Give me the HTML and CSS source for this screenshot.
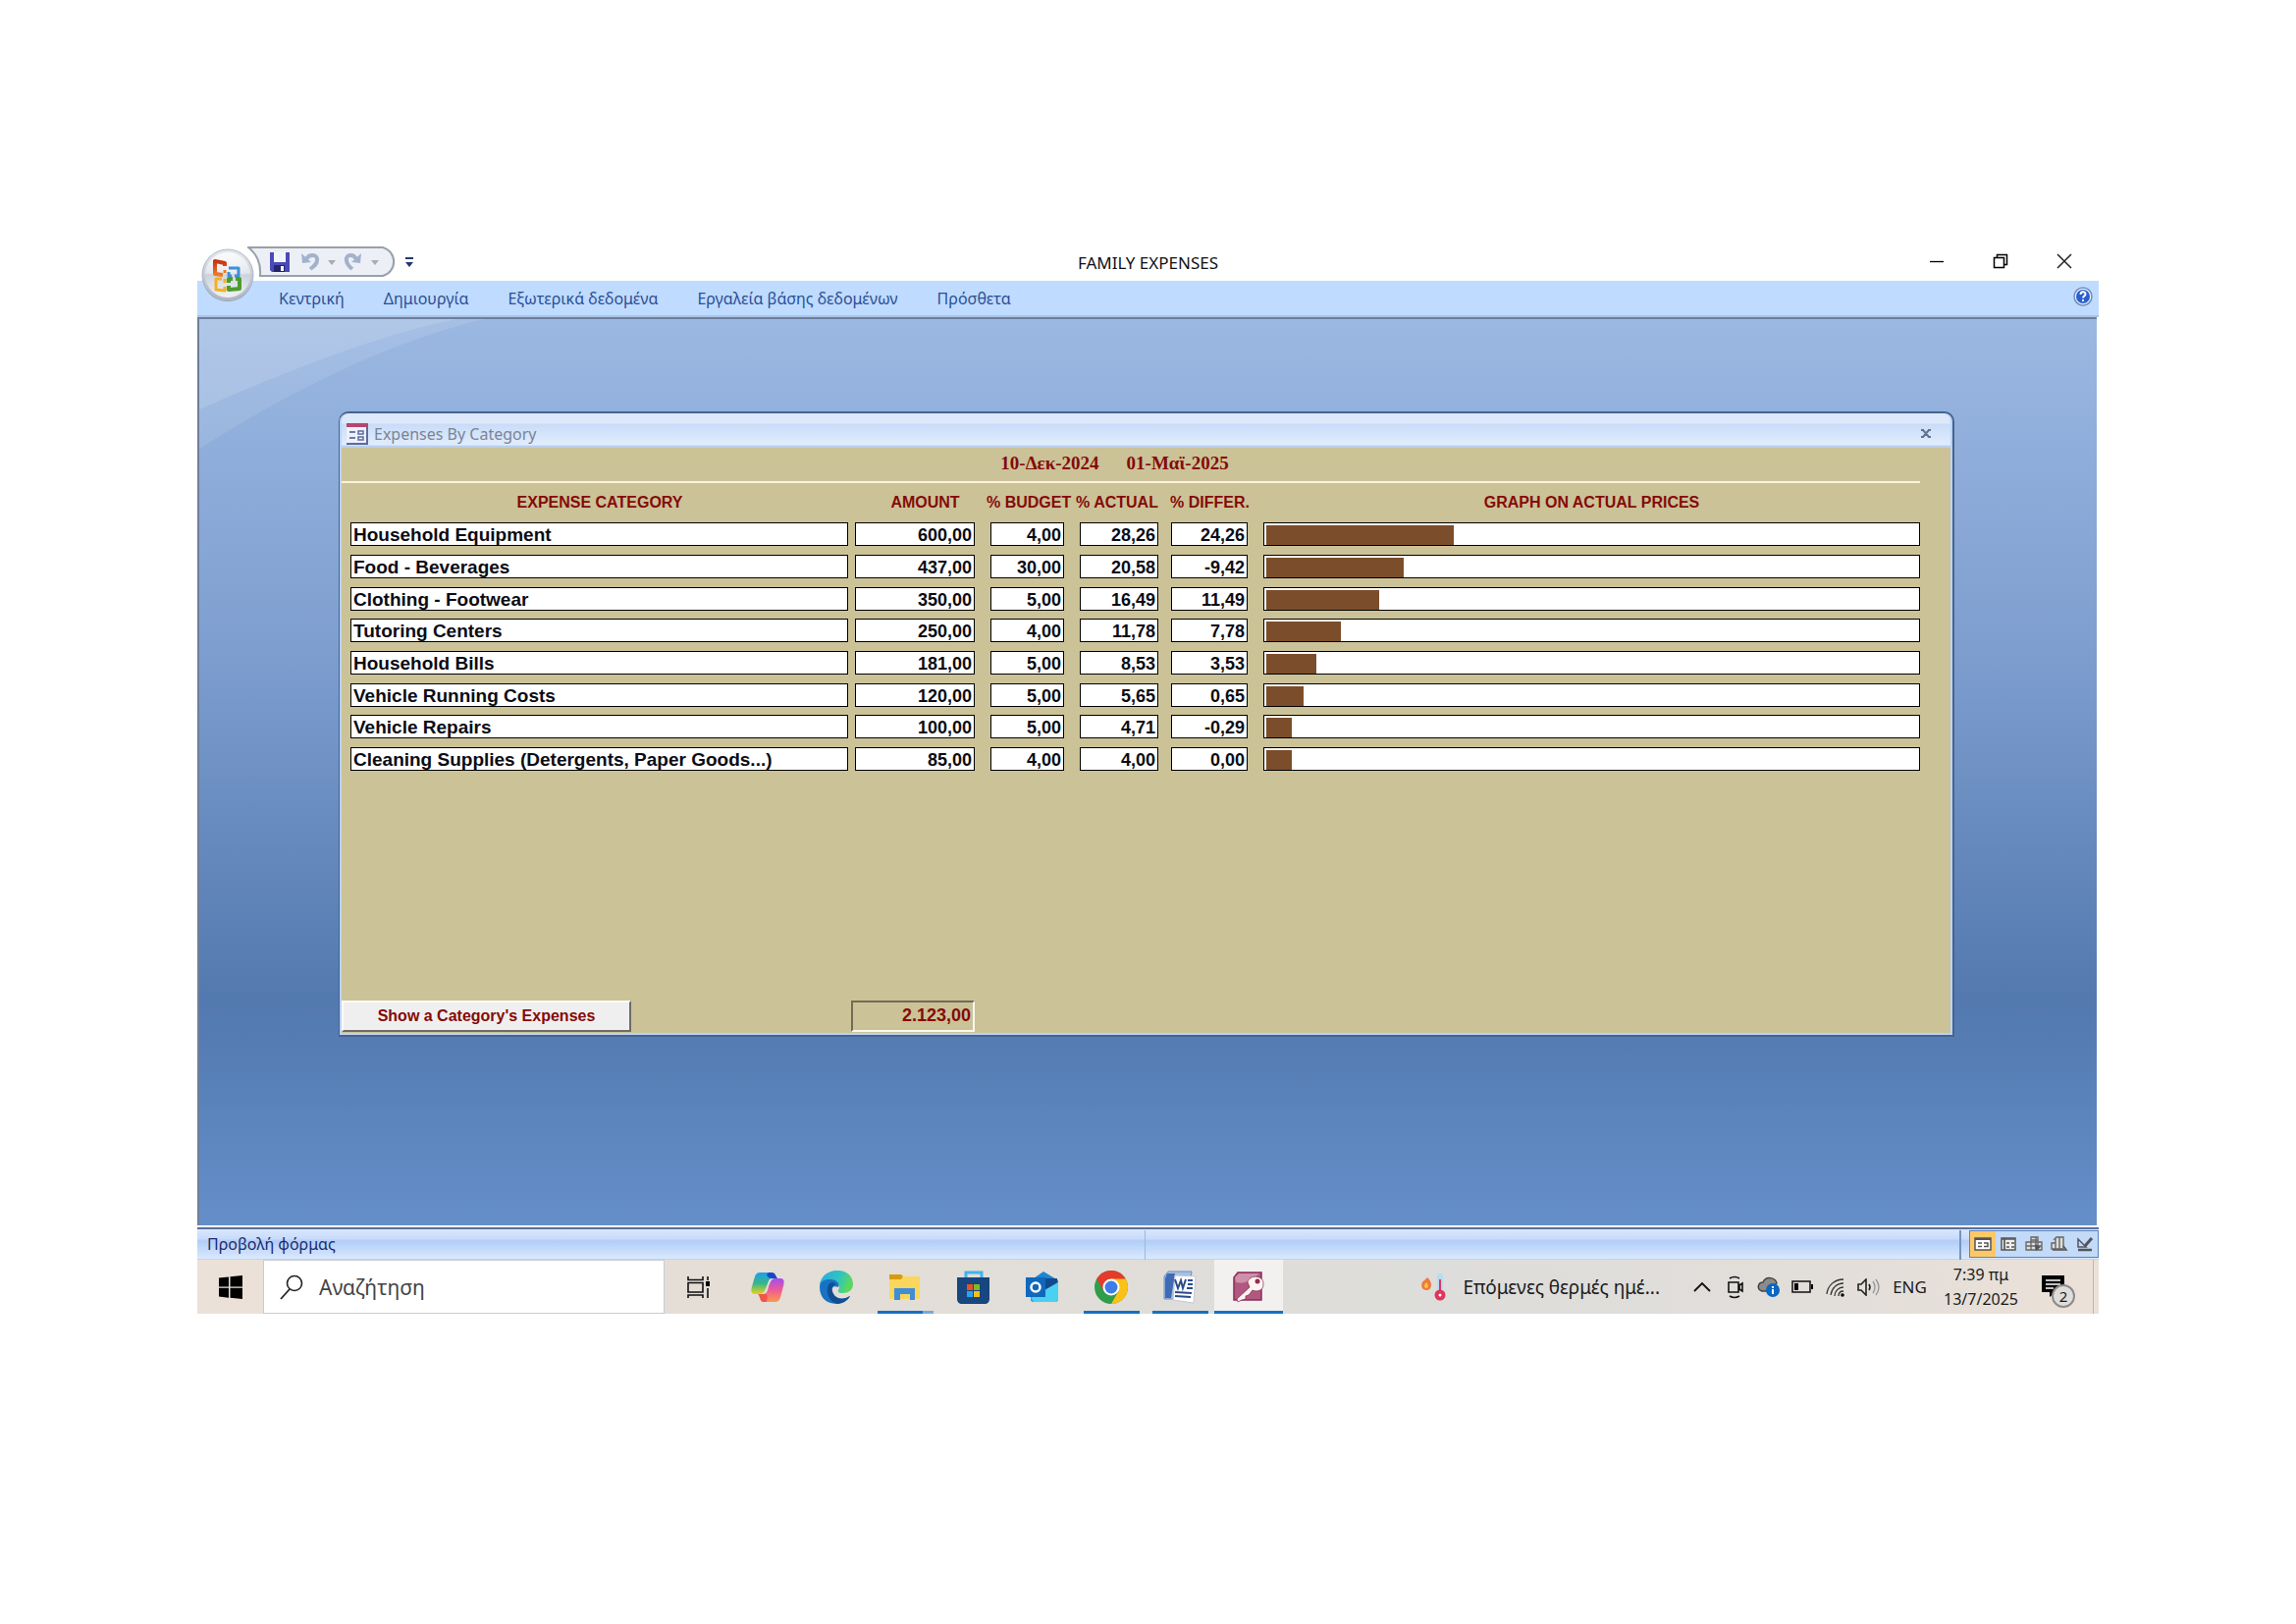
FILE: index.html
```html
<!DOCTYPE html>
<html lang="el">
<head>
<meta charset="utf-8">
<title>FAMILY EXPENSES</title>
<link rel="stylesheet" href="styles.css">
</head>
<body>
<div class="app">
  <header class="titlebar">
    <button class="office" aria-label="Office">
      <svg width="56" height="56" viewBox="0 0 56 56">
        <defs>
          <radialGradient id="orb" cx="50%" cy="35%" r="65%"><stop offset="0" stop-color="#fff"/><stop offset=".55" stop-color="#dfe3ea"/><stop offset="1" stop-color="#a9b3c3"/></radialGradient>
          <linearGradient id="shine" x1="0" y1="0" x2="0" y2="1"><stop offset="0" stop-color="#fff"/><stop offset=".45" stop-color="#e6e9ef"/><stop offset=".5" stop-color="#c9d0dc"/><stop offset="1" stop-color="#fff"/></linearGradient>
          <linearGradient id="lo" x1="0" y1="0" x2="0" y2="1"><stop offset="0" stop-color="#c9330f"/><stop offset="1" stop-color="#f07a28"/></linearGradient>
        </defs>
        <circle cx="28" cy="29" r="26" fill="#8f98a8"/>
        <circle cx="28" cy="28" r="26" fill="url(#orb)" stroke="#b3bac6"/>
        <circle cx="28" cy="28" r="23" fill="url(#shine)" opacity=".8"/>
        <g fill="none" stroke-linejoin="round">
          <path d="M25 19v-3l-10-2v13l8 1" stroke="url(#lo)" stroke-width="4"/>
          <path d="M25 23v3" stroke="#f07a28" stroke-width="3"/>
          <path d="M29 21h10v8h-4M29 25v4h3" stroke="#3f8fd8" stroke-width="3"/>
          <path d="M22 32h-6v11l9 1v-4M25 32v4" stroke="#f6b021" stroke-width="3"/>
          <path d="M29 36v-4h4M36 32h4v10l-11 1v-4" stroke="#4c9c2c" stroke-width="4"/>
        </g>
      </svg>
    </button>
    <svg class="qat-shape" width="155" height="32" viewBox="0 0 155 32"><path d="M1 1h137a15 15 0 0 1 0 29H13C14 18 10 8 1 1z" fill="#ecf0f6" stroke="#99a0a8" stroke-width="2"/></svg>
    <nav class="qat">
      <button class="save" aria-label="Save"><svg width="20" height="20" viewBox="0 0 20 20"><path d="M0 0h20v20H2l-2-2z" fill="#4a4ab8"/><path d="M4 0h12v10H4z" fill="#f2f5fd"/><path d="M4 13h11v7H4z" fill="#25256e"/><path d="M11 14h3v5h-3z" fill="#fff"/></svg></button>
      <button aria-label="Undo"><svg width="20" height="20" viewBox="0 0 20 20"><path d="M6 7c3-6 12-5 11 1 0 4-3 6-7 9" fill="none" stroke="#a3b2cc" stroke-width="4"/><path d="M1 1l1 10 9-1z" fill="#a3b2cc"/></svg></button>
      <svg class="caret" width="8" height="5" viewBox="0 0 8 5"><path d="M0 0h8L4 5z" fill="#a9acb2"/></svg>
      <button aria-label="Redo"><svg width="20" height="20" viewBox="0 0 20 20"><path d="M13 7C10 1 2 2 3 8c0 4 2 6 6 9" fill="none" stroke="#a3b2cc" stroke-width="4"/><path d="M18 1l-1 10-9-1z" fill="#a3b2cc"/></svg></button>
      <svg class="caret" width="8" height="5" viewBox="0 0 8 5"><path d="M0 0h8L4 5z" fill="#a9acb2"/></svg>
      <button class="more" aria-label="Customize"><svg width="8" height="10" viewBox="0 0 8 10"><path d="M0 0h8v2H0zM0 5h8L4 10z" fill="#24386b"/></svg></button>
    </nav>
    <h1>FAMILY EXPENSES</h1>
    <div class="win-buttons">
      <button aria-label="Minimize"><svg width="16" height="16" viewBox="0 0 16 16"><path d="M1 8.500h14" stroke="#000" stroke-width="1.300"/></svg></button>
      <button aria-label="Restore"><svg width="16" height="16" viewBox="0 0 16 16"><path d="M1.500 4.500h10v10h-10zM4.500 4V1.500h10v10H12" fill="none" stroke="#000" stroke-width="1.500"/></svg></button>
      <button aria-label="Close"><svg width="16" height="16" viewBox="0 0 16 16"><path d="M1 1l14 14M15 1L1 15" stroke="#222" stroke-width="1.500"/></svg></button>
    </div>
  </header>
  <nav class="tabs">
    <a href="#">Κεντρική</a><a href="#">Δημιουργία</a><a href="#">Εξωτερικά δεδομένα</a><a href="#">Εργαλεία βάσης δεδομένων</a><a href="#">Πρόσθετα</a>
    <button class="help" aria-label="Help"><svg width="20" height="20" viewBox="0 0 20 20"><circle cx="10" cy="10" r="9" fill="#e8f0fd" stroke="#6f8fbe" stroke-width="1.500"/><circle cx="10" cy="10" r="7" fill="#2a5fd0"/><path d="M7.500 8c0-3.500 5-3.500 5-.5 0 2-2.500 2-2.500 4M10 13v2" fill="none" stroke="#fff" stroke-width="2"/></svg></button>
  </nav>
  <main class="workspace">
    <svg class="sweep" width="300" height="140" viewBox="0 0 300 140"><path d="M0 0h290C190 24 90 75 0 132z" fill="#fff" opacity=".1"/><path d="M0 0h262C175 18 85 55 0 92z" fill="#fff" opacity=".13"/></svg>
    <section class="window">
      <div class="window-title">
        <svg width="22" height="22" viewBox="0 0 22 22"><path d="M0 1h22v20H0z" fill="#eef0fa"/><path d="M0 0h22v4H0z" fill="#b8456f"/><path d="M21 4v17H0" fill="none" stroke="#5d6c9c" stroke-width="2"/><path d="M3 9h6M3 15h6" stroke="#6c7cab" stroke-width="2"/><path d="M12 8h5v3h-5zM12 14h5v3h-5z" fill="none" stroke="#5d6c9c" stroke-width="1.500"/></svg>
        <h2>Expenses By Category</h2>
        <button aria-label="Close form"><svg width="10" height="9" viewBox="0 0 10 9"><path d="M0 1h3M7 1h3M0 8h3M7 8h3M2 1l6 7M8 1L2 8" stroke="#64748c" stroke-width="2"/></svg></button>
      </div>
      <div class="form">
        <div class="period"><time datetime="2024-12-10">10-Δεκ-2024</time><time datetime="2025-05-01">01-Μαϊ-2025</time></div>
        <table>
          <colgroup><col class="c-name"><col class="c-amount"><col class="c-budget"><col class="c-actual"><col class="c-differ"><col></colgroup>
          <thead><tr><th>EXPENSE CATEGORY</th><th class="amount">AMOUNT</th><th class="pct">% BUDGET</th><th class="pct">% ACTUAL</th><th class="pct">% DIFFER.</th><th>GRAPH ON ACTUAL PRICES</th></tr></thead>
          <tbody>
            <tr><td><div>Household Equipment</div></td><td><div>600,00</div></td><td><div>4,00</div></td><td><div>28,26</div></td><td><div>24,26</div></td><td><div><i class="bar" style="width:28.8%"></i></div></td></tr>
            <tr><td><div>Food - Beverages</div></td><td><div>437,00</div></td><td><div>30,00</div></td><td><div>20,58</div></td><td><div>-9,42</div></td><td><div><i class="bar" style="width:21.1%"></i></div></td></tr>
            <tr><td><div>Clothing - Footwear</div></td><td><div>350,00</div></td><td><div>5,00</div></td><td><div>16,49</div></td><td><div>11,49</div></td><td><div><i class="bar" style="width:17.3%"></i></div></td></tr>
            <tr><td><div>Tutoring Centers</div></td><td><div>250,00</div></td><td><div>4,00</div></td><td><div>11,78</div></td><td><div>7,78</div></td><td><div><i class="bar" style="width:11.5%"></i></div></td></tr>
            <tr><td><div>Household Bills</div></td><td><div>181,00</div></td><td><div>5,00</div></td><td><div>8,53</div></td><td><div>3,53</div></td><td><div><i class="bar" style="width:7.7%"></i></div></td></tr>
            <tr><td><div>Vehicle Running Costs</div></td><td><div>120,00</div></td><td><div>5,00</div></td><td><div>5,65</div></td><td><div>0,65</div></td><td><div><i class="bar" style="width:5.8%"></i></div></td></tr>
            <tr><td><div>Vehicle Repairs</div></td><td><div>100,00</div></td><td><div>5,00</div></td><td><div>4,71</div></td><td><div>-0,29</div></td><td><div><i class="bar" style="width:3.9%"></i></div></td></tr>
            <tr><td><div>Cleaning Supplies (Detergents, Paper Goods...)</div></td><td><div>85,00</div></td><td><div>4,00</div></td><td><div>4,00</div></td><td><div>0,00</div></td><td><div><i class="bar" style="width:3.9%"></i></div></td></tr>
          </tbody>
        </table>
        <footer class="form-footer"><button class="show">Show a Category's Expenses</button><output class="total">2.123,00</output></footer>
      </div>
    </section>
  </main>
  <div class="status">
    <span class="status-text">Προβολή φόρμας</span>
    <div class="status-rest"></div>
    <div class="views">
      <button class="on" aria-label="Form view"><svg width="18" height="16" viewBox="0 0 18 16"><path d="M1 2h16v12H1z" fill="#fff" stroke="#555" stroke-width="1.500"/><path d="M1 3h16" stroke="#555" stroke-width="2"/><path d="M4 7h4M4 10.500h4M10 10.500h4V7h-4" stroke="#555" stroke-width="1.500" fill="none"/></svg></button>
      <button aria-label="Datasheet view"><svg width="18" height="16" viewBox="0 0 18 16"><path d="M2 2h14v12H2z" fill="#eee" stroke="#555" stroke-width="1.500"/><path d="M2 3h14M5 2v12M7 7h3M12 7h3M7 11h3M12 11h3" stroke="#555" stroke-width="1.700"/></svg></button>
      <button aria-label="PivotTable view"><svg width="18" height="16" viewBox="0 0 18 16"><path d="M6 1h7v13H6zM1 6h16v8H1zM6 6v8M11 1v13M1 10h16M6 4h7" fill="#ddd" stroke="#666" stroke-width="1.300"/><path d="M10 8l6 3-5 4z" fill="#555"/></svg></button>
      <button aria-label="PivotChart view"><svg width="18" height="16" viewBox="0 0 18 16"><path d="M1 7h4v6H1zM4 3l2-2h3v12H5V3zM9 1h4v12H9z" fill="#ddd" stroke="#666" stroke-width="1.400"/><path d="M2 14h14l-3-4" fill="none" stroke="#555" stroke-width="1.500"/></svg></button>
      <button aria-label="Design view"><svg width="18" height="16" viewBox="0 0 18 16"><path d="M2 3v8h8z" fill="none" stroke="#556" stroke-width="1.500"/><path d="M16 2L9 10" stroke="#555" stroke-width="3"/><path d="M2 14h14" stroke="#555" stroke-width="2.500"/></svg></button>
    </div>
  </div>
  <footer class="taskbar">
    <button class="start" aria-label="Start"><svg width="24" height="26" viewBox="0 0 24 24"><path d="M0 2.500L10 1.500v10H0zM11.500 1.200L24 0v11.500H11.500zM0 12.800h10v10L0 21.500zM11.500 12.800H24V24l-12.500-1.200z"/></svg></button>
    <label class="search"><svg width="24" height="26" viewBox="0 0 24 26"><circle cx="15" cy="9" r="7.500" fill="none" stroke="#222" stroke-width="1.600"/><path d="M10 15L1 25" stroke="#222" stroke-width="1.800"/></svg><input type="text" placeholder="Αναζήτηση" aria-label="Αναζήτηση"></label>
    <button class="task" aria-label="Task view"><svg width="24" height="24" viewBox="0 0 24 24"><path d="M1 1v3.500h15V1M1 23v-3h15v3M1 7.500h15v9.500H1zM21 1v4M21 13v10" fill="none" stroke="#111" stroke-width="1.600"/><path d="M19 6h4v5h-4z"/></svg></button>
    <button class="task" aria-label="Copilot"><svg width="34" height="30" viewBox="0 0 34 30"><defs><linearGradient id="ca" x1="0" y1="0" x2="0" y2="1"><stop offset="0" stop-color="#1fa0ee"/><stop offset=".5" stop-color="#36b58a"/><stop offset="1" stop-color="#e9d11c"/></linearGradient><linearGradient id="cb" x1="0" y1="0" x2="0" y2="1"><stop offset="0" stop-color="#a24ef0"/><stop offset=".5" stop-color="#ee5c93"/><stop offset="1" stop-color="#fb9a4c"/></linearGradient></defs><path d="M9 0h12c4 0 4 4 6 6h-5c-4 0-4 3-6 8-2 5-3 8-7 8H4c-5 0-4-5-2-11S4 0 9 0z" fill="url(#ca)"/><path d="M18 0h3c4 0 4 4 6 6h-6c-2 0-4-1-5-4z" fill="#1648c8"/><path d="M25 30H13c-4 0-3-4-6-8h5c4 0 5-3 6-8 2-5 3-8 7-8h5c5 0 4 5 2 12s-2 12-7 12z" fill="url(#cb)"/><path d="M16 30h-3c-4 0-3-4-5-8h7c2 0 2 4 1 8z" fill="#f0564a"/></svg></button>
    <button class="task" aria-label="Edge"><svg width="34" height="34" viewBox="0 0 34 34"><defs><linearGradient id="ea" x1="0" y1="0" x2="1" y2=".3"><stop offset="0" stop-color="#2ba6e0"/><stop offset=".6" stop-color="#2fc3c4"/><stop offset="1" stop-color="#5bd85c"/></linearGradient></defs><path d="M0 15C2-5 34-5 34 14c0 6-5 9-10 9-4 0-6-1-5-3 3-5-1-8-6-8S2 13 0 15z" fill="url(#ea)"/><path d="M0 17c0-6 5-8 10-8 7 0 11 4 9 8-6-3-9 3-6 8 4 6 12 5 18 1-7 12-31 11-31-9z" fill="#1673c4"/><path d="M10 13c-5 7-1 19 8 21 6 0 11-4 13-8-9 5-16 2-18-5-1-4 1-7 4-7-2-2-5-2-7-1z" fill="#114f92"/></svg></button>
    <button class="task run more-win" aria-label="Explorer"><svg width="32" height="26" viewBox="0 0 32 26"><path d="M0 2h31v23H0z" fill="#fbd65c"/><path d="M0 0h12l2 2-2 3H0z" fill="#d79b10"/><path d="M5 14h21v12h-5v-6H11v6H5z" fill="#3e8ed6"/></svg></button>
    <button class="task" aria-label="Store"><svg width="34" height="34" viewBox="0 0 34 34"><path d="M9 8V2h16v6" fill="none" stroke="#3fb4ee" stroke-width="3"/><path d="M0 7h33v22c0 3-2 5-5 5H5c-3 0-5-2-5-5z" fill="#18467e"/><path d="M10 14h6v6h-6z" fill="#ee5024"/><path d="M17 14h6v6h-6z" fill="#7dbb25"/><path d="M10 21h6v6h-6z" fill="#2ba4ee"/><path d="M17 21h6v6h-6z" fill="#fdba1b"/></svg></button>
    <button class="task" aria-label="Outlook"><svg width="34" height="32" viewBox="0 0 34 32"><path d="M5 9L18 0l15 9v19c0 2-1 3-3 3H8c-2 0-3-1-3-3z" fill="#1e85d2"/><path d="M20 7h12v6L20 22z" fill="#114a8c"/><path d="M33 11v17c0 2-1 3-3 3H8l-3-4z" fill="#4bd0f2"/><path d="M0 6h20v20H0z" fill="#0f68bd"/><circle cx="10" cy="16" r="4.500" fill="none" stroke="#fff" stroke-width="2.500"/></svg></button>
    <button class="task run" aria-label="Chrome"><svg width="34" height="34" viewBox="0 0 34 34"><circle cx="17" cy="17" r="17" fill="#2f9e49"/><path d="M17 17L2.300 8.500A17 17 0 0 1 31.700 8.500z" fill="#e33b2e"/><path d="M17 8.500h14.700A17 17 0 0 1 17 34l7.400-12.700z" fill="#fbc116"/><path d="M2.300 8.500L9.600 21.200 17 8.500z" fill="#e33b2e"/><circle cx="17" cy="17" r="8.500" fill="#fff"/><circle cx="17" cy="17" r="6.500" fill="#3e7de8"/></svg></button>
    <button class="task run" aria-label="Word"><svg width="34" height="34" viewBox="0 0 34 34"><path d="M5 1h24l-4 28H1V6z" fill="#a9bfe3" stroke="#6f8fc4"/><path d="M4 3h8L8 28H2V8z" fill="#3f6bb3"/><path d="M12 5l21 1-2 27-21-3z" fill="#fff" stroke="#c3cad6"/><path d="M12 9l3 9 3-8 2 8 3-9" fill="none" stroke="#2a4b8c" stroke-width="2"/><path d="M25 10h5M25 14h5M24 18h6M12 22l17 1M12 26l16 1" stroke="#2a4b8c" stroke-width="2.200"/></svg></button>
    <button class="task run active" aria-label="Access"><svg width="34" height="34" viewBox="0 0 34 34"><path d="M6 2h24v28H2V7z" fill="#b0587f" stroke="#8d2d5a" stroke-width="1.500"/><path d="M4 12C14 14 20 10 28 3H7L3 7z" fill="#cf90ab"/><path d="M16 12c1-8 17-8 16 2 0 7-7 8-11 6l-4 5-3 1v3l-4 1-4 2-1-3 13-12z" fill="#fff3f0" stroke="#7b2750" stroke-width=".7"/><circle cx="26" cy="11" r="2.500" fill="#8d2d5a"/></svg></button>
    <div class="tray">
      <button class="weather"><svg width="26" height="28" viewBox="0 0 26 28"><path d="M6 4c6 5 5 13-1 13S-1 9 3 7z" fill="#ee7a3a"/><path d="M5 9c3 3 2 6 0 6s-3-3 0-6z" fill="#fcc04a"/><path d="M16 3a3 3 0 0 1 6 0v15H16z" fill="#b6dcf2"/><path d="M18 6h2v14h-2z" fill="#e0345c"/><circle cx="19" cy="22" r="5.500" fill="#e0345c"/><circle cx="19" cy="22" r="1.500" fill="#fff"/></svg>Επόμενες θερμές ημέ...</button>
      <button class="ti" aria-label="Hidden icons"><svg width="18" height="12" viewBox="0 0 18 12"><path d="M1 10l8-8 8 8" fill="none" stroke="#111" stroke-width="1.800"/></svg></button>
      <button class="ti" aria-label="Meet"><svg width="18" height="24" viewBox="0 0 18 24"><path d="M3 3q5-3 10 0M3 21q5 3 10 0M2 7h10v10H2zM13 10l3-2v8l-3-2z" fill="none" stroke="#111" stroke-width="1.600"/></svg></button>
      <button class="ti" aria-label="OneDrive"><svg width="24" height="22" viewBox="0 0 24 22"><path d="M5 15c-6-2-4-9 1-9 3-7 13-5 14 1l-4 3-4 5z" fill="#8b8b8b" stroke="#444" stroke-width="1.500"/><circle cx="16" cy="14" r="7" fill="#0a66c2"/><path d="M16 10v2M16 13v5" stroke="#fff" stroke-width="2"/></svg></button>
      <button class="ti" aria-label="Battery"><svg width="22" height="14" viewBox="0 0 22 14"><path d="M1 1h18v11H1z" fill="none" stroke="#111" stroke-width="1.500"/><path d="M3 3h4v7H3zM20 4h2v5h-2z"/></svg></button>
      <button class="ti" aria-label="Network"><svg width="20" height="20" viewBox="0 0 20 20"><path d="M1 17C2 8 9 2 18 2M5 18C6 11 11 6 18 6M9 19c0-5 4-9 9-9M13 19c0-3 2-5 5-5" fill="none" stroke="#333" stroke-width="1.300"/><circle cx="17" cy="18" r="1.800"/></svg></button>
      <button class="ti" aria-label="Volume"><svg width="24" height="18" viewBox="0 0 24 18"><path d="M1 6h3l5-5v16l-5-5H1z" fill="none" stroke="#222" stroke-width="1.600"/><path d="M12 6q2 3 0 6" fill="none" stroke="#222" stroke-width="1.600"/><path d="M16 3q4 6 0 12M19 1q6 8 0 16" fill="none" stroke="#999" stroke-width="1.400"/></svg></button>
      <button class="lang">ENG</button>
      <button class="clock"><time>7:39 πμ</time><time>13/7/2025</time></button>
      <button class="notes" aria-label="Notifications"><svg width="24" height="23" viewBox="0 0 24 23"><path d="M0 0h23v17h-9l-6 5v-5H0z"/><path d="M4 5h15M4 9h15M4 13h8" stroke="#fff" stroke-width="1.500"/></svg><span class="badge">2</span></button>
    </div>
  </footer>
</div>
</body>
</html>
```
FILE: styles.css
```css
* { box-sizing: border-box; }
body {
  margin: 0;
  padding: 248px 201px;
  background: #fff;
  font-family: "Noto Sans", "Open Sans", sans-serif;
  font-size: 16px;
}
button { border: 0; padding: 0; background: none; font: inherit; color: inherit; display: flex; align-items: center; justify-content: center; }
h1, h2 { margin: 0; font-weight: 400; }

/* title bar */
.titlebar { position: relative; height: 38px; display: flex; align-items: center; justify-content: flex-end; }
.office { position: absolute; left: 3px; top: 4px; z-index: 2; }
.qat-shape { position: absolute; left: 51px; top: 3px; }
.qat { position: absolute; left: 74px; top: 9px; display: flex; align-items: center; gap: 8px; }
.qat .save { margin-right: 3px; }
.qat .more { margin-left: 19px; }
h1 { position: absolute; left: 0; right: 0; text-align: center; font-size: 17px; line-height: 24px; color: #111; top: 8px; }
.win-buttons { position: relative; display: flex; gap: 49px; padding: 0 27px 2px 0; }

.tabs { display: flex; align-items: center; gap: 40px; height: 37px; padding: 0 6px 0 83px; background: #bfdbff; border-bottom: 2px solid #a9c4e8; }
.tabs a { color: #2b4f96; text-decoration: none; font-size: 16px; line-height: 24px; }
.tabs .help { margin-left: auto; padding-bottom: 3px; }

/* workspace */
.workspace {
  position: relative;
  margin-right: 2px;
  padding: 94px 145px 192px 142px;
  border: 2px solid #6e7f9c;
  border-width: 2px 0 0 2px;
  background: linear-gradient(#9bb8e2, #7f9fd0 35%, #5379af 75%, #557db4 80%, #658fc9);
}
.sweep { position: absolute; left: 0; top: 0; }
.window {
  position: relative;
  border: 1px solid #46648f;
  border-width: 2px 2px 2px 1px;
  border-radius: 10px 10px 0 0;
  background: #bcd3f5;
  padding: 0 2px 2px;
}
.window-title { display: flex; align-items: center; height: 35px; padding: 6px 20px 0 5px; gap: 6px; border-radius: 8px 8px 0 0; background: linear-gradient(#dde9fb 0, #dde9fb 28%, #c9dcf8 32%, #e1edfd 92%, #b9cfee 94%); }
h2 { font-size: 16px; line-height: 24px; color: #7a8496; }
.window-title button { margin-left: auto; }
.form { padding-bottom: 1px; background: #cbc298; color: #850a06; font-family: "Liberation Sans", Arial, sans-serif; font-weight: 700; font-size: 16px; }
.period {
  display: flex; justify-content: center; gap: 28px;
  height: 36px; margin-right: 31px; padding: 4px 33px 0 0;
  border-bottom: 2px solid #faf3dc;
  font-family: "Liberation Serif", "Times New Roman", serif; font-size: 19px; line-height: 24px;
}

/* expense table */
table { width: 100%; table-layout: fixed; border-collapse: collapse; }
.c-name { width: 519px; }
.c-amount { width: 126px; }
.c-budget { width: 91px; }
.c-actual { width: 96px; }
.c-differ { width: 91px; }
th { height: 40px; padding: 0 0 0 7px; white-space: nowrap; vertical-align: middle; }
th.amount { padding-left: 25px; }
th.pct { padding-left: 12px; }
th:last-child { padding: 0 31px 0 16px; }
td { height: 33px; padding: 0; vertical-align: top; }
tr:nth-child(3n) td { height: 32px; }
td div { height: 24px; margin-left: 16px; padding: 1px 2px 0; border: 1px solid #000; background: #fff; color: #0c0c14; font-size: 18px; line-height: 22px; text-align: right; white-space: nowrap; }
td:first-child div { margin: 0 3px 0 9px; text-align: left; font-size: 19px; }
td:nth-child(2) div { margin-left: 4px; }
td:nth-child(5) div { margin-left: 13px; }
td:last-child div { margin-right: 31px; padding-top: 2px; }
.bar { display: block; height: 20px; background: #7c4d2a; }
.form-footer { display: flex; align-items: flex-end; gap: 224px; padding-top: 225px; }
.show { width: 295px; height: 32px; border: 2px solid; border-color: #fbfbfb #6f6c64 #6f6c64 #fbfbfb; background: #f0eff0; }
.total { width: 126px; height: 32px; border: 2px solid; border-color: #716c55 #fbf8ec #fbf8ec #716c55; padding-right: 2px; text-align: right; font-size: 18px; line-height: 26px; }

/* status bar */
.status { display: flex; height: 33px; padding-top: 1px; margin-top: 2px; border-top: 2px solid #5a6f9c; background: linear-gradient(#d9e7fc, #c9dcfa 30%, #b1cdf7 38%, #d9e8fd 95%, #b4cbe8) padding-box; }
.status-text { width: 966px; padding-left: 10px; border-right: 1px solid #9db7dd; color: #1b2a6c; line-height: 28px; }
.status-rest { flex: 1; border-right: 2px solid #7593c4; }
.views { display: flex; margin: 0 0 2px 8px; border: 1px solid #5b82c0; background: #c3daf8; }
.views button { width: 26px; }
.views .on { background: #fdc866; }

/* taskbar */
.taskbar { display: flex; height: 55px; background: linear-gradient(90deg, #ebe1d8, #e5ded6 25%, #dddddb 65%, #e2deda 85%, #ebe1d8); color: #1b1b1b; }
.start { width: 67px; }
.search { display: flex; align-items: center; gap: 16px; width: 409px; padding-left: 16px; background: #fff; border: 1px solid #c8ccd2; }
.search input { flex: 1; min-width: 0; border: 0; outline: 0; padding: 0; background: none; font: 21px/28px "Noto Sans", sans-serif; }
.search input::placeholder { color: #444; opacity: 1; }
.task { position: relative; width: 70px; }
.run::after { content: ""; position: absolute; left: 7px; right: 6px; bottom: 0; height: 3px; background: #1272c4; }
.more-win::after { background: linear-gradient(90deg, #1272c4 80%, #7aa9d3 80%); }
.active { background: #f3f1ef; }
.active::after { left: 0; right: 0; }
.tray { display: flex; align-items: center; margin-left: auto; border-right: 1px solid #bbb6b0; margin-right: 5px; height: 100%; }
.weather { gap: 16px; font-size: 19px; margin-right: 26px; white-space: nowrap; }
.ti { width: 34px; }
.lang { width: 49px; font-size: 17px; }
.clock { flex-direction: column; width: 92px; margin-left: 2px; line-height: 25px; font-size: 16px; }
.notes { position: relative; width: 68px; padding-right: 12px; }
.badge { position: absolute; left: 26px; top: 9px; width: 24px; height: 24px; border: 2px solid #8b8b8b; border-radius: 50%; background: #deddda; font-size: 15px; line-height: 20px; }
```
